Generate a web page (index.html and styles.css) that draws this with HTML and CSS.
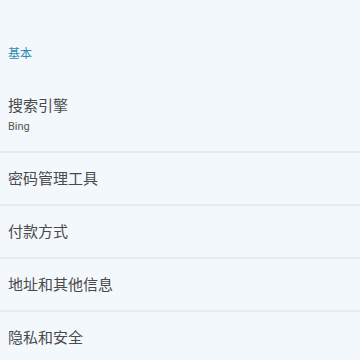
FILE: index.html
```html
<!DOCTYPE html>
<html lang="zh-CN">
<head>
    <meta charset="UTF-8">
    <meta name="viewport" content="width=device-width, initial-scale=1.0">
    <title>设置</title>
    <link rel="stylesheet" href="styles.css">
</head>
<body>
    <div class="settings">
        <h3 class="section-title">基本</h3>
        <div class="setting-row">
            <div class="setting-name">搜索引擎</div>
            <div class="setting-value">Bing</div>
        </div>
        <div class="setting-row">
            <div class="setting-name">密码管理工具</div>
        </div>
        <div class="setting-row">
            <div class="setting-name">付款方式</div>
        </div>
        <div class="setting-row">
            <div class="setting-name">地址和其他信息</div>
        </div>
        <div class="setting-row">
            <div class="setting-name">隐私和安全</div>
        </div>
    </div>
</body>
</html>
```

FILE: styles.css
```css
body {
    margin: 0;
    background-color: #f3f8fc;
    font-family: Roboto, "Noto Sans CJK SC", sans-serif;
    color: #4a4a4a;
}

.settings {
    display: flex;
    flex-direction: column;
}

.section-title {
    margin: 0;
    padding: 46px 8px 18px;
    font-size: 12px;
    line-height: 16px;
    font-weight: normal;
    color: #2f8ab5;
}

.setting-row {
    padding: 16px 8px 15px;
    border-bottom: 2px solid #e6ebef;
}

.setting-row:first-of-type {
    padding-bottom: 16px;
}

.setting-name {
    font-size: 15px;
    line-height: 20px;
}

.setting-value {
    margin-top: 3px;
    font-size: 11px;
    line-height: 16px;
    color: #555;
}
```
